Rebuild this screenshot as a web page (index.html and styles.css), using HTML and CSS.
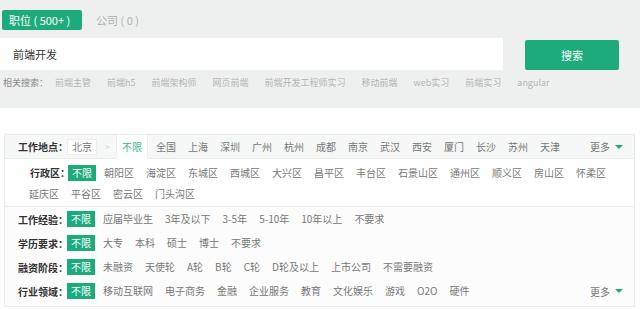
FILE: index.html
```html
<!DOCTYPE html>
<html lang="zh-CN">
<head>
    <meta charset="UTF-8">
    <title>前端开发 - 职位搜索</title>
    <link rel="stylesheet" href="styles.css">
</head>
<body>
    <div class="search-area">
        <div class="type-tabs">
            <span class="type-tab active">职位 ( 500+ )</span>
            <span class="type-tab">公司 ( 0 )</span>
        </div>

        <div class="search-bar">
            <div class="search-input">前端开发</div>
            <button class="search-btn">搜索</button>
        </div>

        <div class="related">
            <span class="related-label">相关搜索：</span>
            <a>前端主管</a>
            <a>前端h5</a>
            <a>前端架构师</a>
            <a>网页前端</a>
            <a>前端开发工程师实习</a>
            <a>移动前端</a>
            <a>web实习</a>
            <a>前端实习</a>
            <a>angular</a>
        </div>
    </div>

    <div class="filter-box">
        <!-- city row -->
        <div class="city-row">
            <span class="label">工作地点：</span>
            <span class="city-current">北京</span>
            <span class="arrow">&gt;</span>
            <span class="city-tab">不限</span>
            <span class="item">全国</span>
            <span class="item">上海</span>
            <span class="item">深圳</span>
            <span class="item">广州</span>
            <span class="item">杭州</span>
            <span class="item">成都</span>
            <span class="item">南京</span>
            <span class="item">武汉</span>
            <span class="item">西安</span>
            <span class="item">厦门</span>
            <span class="item">长沙</span>
            <span class="item">苏州</span>
            <span class="item">天津</span>
            <span class="more">更多 <i class="tri"></i></span>
        </div>

        <div class="district">
            <span class="label">行政区：</span>
            <span class="item on">不限</span>
            <span class="item">朝阳区</span>
            <span class="item">海淀区</span>
            <span class="item">东城区</span>
            <span class="item">西城区</span>
            <span class="item">大兴区</span>
            <span class="item">昌平区</span>
            <span class="item">丰台区</span>
            <span class="item">石景山区</span>
            <span class="item">通州区</span>
            <span class="item">顺义区</span>
            <span class="item">房山区</span>
            <span class="item">怀柔区</span>
            <span class="item">延庆区</span>
            <span class="item">平谷区</span>
            <span class="item">密云区</span>
            <span class="item">门头沟区</span>
        </div>

        <div class="options">
            <div class="opt-row">
                <span class="label">工作经验：</span>
                <span class="item on">不限</span>
                <span class="item">应届毕业生</span>
                <span class="item">3年及以下</span>
                <span class="item">3-5年</span>
                <span class="item">5-10年</span>
                <span class="item">10年以上</span>
                <span class="item">不要求</span>
            </div>
            <div class="opt-row">
                <span class="label">学历要求：</span>
                <span class="item on">不限</span>
                <span class="item">大专</span>
                <span class="item">本科</span>
                <span class="item">硕士</span>
                <span class="item">博士</span>
                <span class="item">不要求</span>
            </div>
            <div class="opt-row">
                <span class="label">融资阶段：</span>
                <span class="item on">不限</span>
                <span class="item">未融资</span>
                <span class="item">天使轮</span>
                <span class="item">A轮</span>
                <span class="item">B轮</span>
                <span class="item">C轮</span>
                <span class="item">D轮及以上</span>
                <span class="item">上市公司</span>
                <span class="item">不需要融资</span>
            </div>
            <div class="opt-row">
                <span class="label">行业领域：</span>
                <span class="item on">不限</span>
                <span class="item">移动互联网</span>
                <span class="item">电子商务</span>
                <span class="item">金融</span>
                <span class="item">企业服务</span>
                <span class="item">教育</span>
                <span class="item">文化娱乐</span>
                <span class="item">游戏</span>
                <span class="item">O2O</span>
                <span class="item">硬件</span>
                <span class="more">更多 <i class="tri"></i></span>
            </div>
        </div>
    </div>
</body>
</html>
```

FILE: styles.css
```css
body {
    margin: 0;
    background: #fff;
    font-family: "Noto Sans CJK SC", "Noto Sans", sans-serif;
    color: #777;
}

/* top search area */
.search-area {
    background: #eef0ef;
    height: 108px;
    padding-top: 10px;
    box-sizing: border-box;
}

.type-tabs {
    display: flex;
    align-items: center;
    padding-left: 2px;
}

.type-tab {
    height: 20px;
    line-height: 20px;
    padding: 0 7px;
    font-size: 11px;
    color: #b0b0b0;
    margin-right: 7px;
    white-space: nowrap;
}

.type-tab.active {
    background: #1dab7e;
    color: #fff;
    border-radius: 2px;
    width: 66px;
}

.search-bar {
    display: flex;
    margin-top: 8px;
}

.search-input {
    width: 503px;
    height: 32px;
    line-height: 32px;
    background: #fff;
    padding-left: 13px;
    box-sizing: border-box;
    font-size: 11px;
    color: #333;
}

.search-btn {
    margin: 2px 0 0 22px;
    width: 94px;
    height: 30px;
    border: none;
    border-radius: 2px;
    background: #1dab7e;
    color: #fff;
    font-family: inherit;
    font-size: 11px;
}

.related {
    display: flex;
    align-items: center;
    margin-top: 5px;
    padding-left: 3px;
    font-size: 9px;
    line-height: 16px;
    white-space: nowrap;
}

.related-label {
    color: #888;
    margin-right: 7px;
}

.related a {
    color: #b4b4b4;
    margin-right: 16px;
}

/* filter box */
.filter-box {
    margin: 26px 5px 0 4px;
    border: 1px solid #e8e9e9;
    font-size: 10px;
}

.label {
    color: #333;
    font-weight: bold;
    width: 49px;
    flex-shrink: 0;
    white-space: nowrap;
}

.item {
    padding: 0 4px;
    margin-right: 4px;
    line-height: 16px;
    white-space: nowrap;
}

.item.on {
    background: #1dab7e;
    color: #fff;
}

.city-row {
    display: flex;
    align-items: center;
    height: 23px;
    background: #f6f7f7;
    border-bottom: 1px solid #ebecec;
    padding: 0 11px 0 13px;
}

.city-current {
    background: #fff;
    border: 1px solid #eceded;
    padding: 0 4px;
    line-height: 14px;
}

.arrow {
    color: #d4d4d4;
    margin: 0 6px 0 8px;
    font-size: 9px;
}

.city-tab {
    align-self: stretch;
    background: #fff;
    color: #35b68e;
    width: 32px;
    text-align: center;
    line-height: 24px;
    margin-bottom: -1px;
    margin-right: 4px;
    border-left: 1px solid #eceded;
    border-right: 1px solid #eceded;
    box-sizing: border-box;
}

.more {
    margin-left: auto;
    display: flex;
    align-items: center;
    white-space: nowrap;
}

.tri {
    margin-left: 5px;
    width: 0;
    height: 0;
    border-left: 4px solid transparent;
    border-right: 4px solid transparent;
    border-top: 4px solid #1dab7e;
}

.district {
    display: flex;
    flex-wrap: wrap;
    align-items: center;
    padding: 3px 0 2px 20px;
    border-bottom: 1px solid #ebecec;
}

.district .label {
    width: 38px;
    margin-left: 5px;
}

.district .item,
.district .label {
    line-height: 21px;
}

.district .item.on {
    line-height: 16px;
}

.options {
    background: #fcfcfc;
    padding: 0 11px 3px 13px;
}

.opt-row {
    display: flex;
    align-items: center;
    height: 24px;
}
```
